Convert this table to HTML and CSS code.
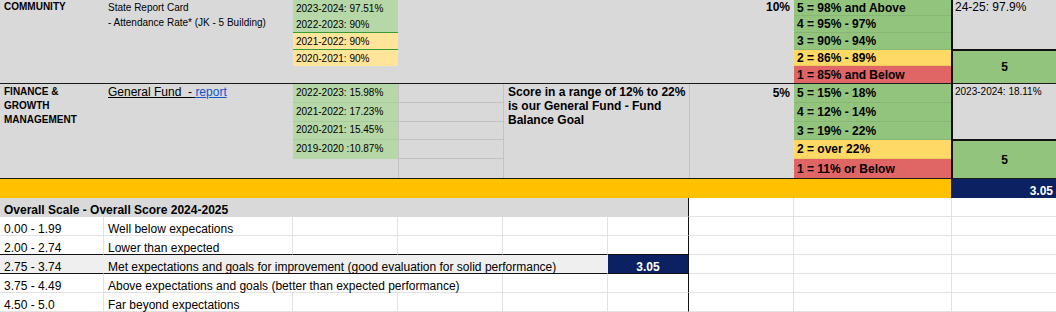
FILE: index.html
```html
<!DOCTYPE html>
<html lang="en">
<head>
<meta charset="utf-8">
<title>Scorecard</title>
<link rel="stylesheet" href="styles.css">
</head>
<body>
<div class="sheet">
  <div class="block community">
    <div class="cell w-a label">COMMUNITY</div>
    <div class="cell w-b desc">State Report Card<br>- Attendance Rate* (JK - 5 Building)</div>
    <div class="stack w-c">
      <div class="hv lg">2023-2024: 97.51%</div>
      <div class="hv lg gline">2022-2023: 90%</div>
      <div class="hv ly gline">2021-2022: 90%</div>
      <div class="hv ly">2020-2021: 90%</div>
      <div></div>
    </div>
    <div class="w-def"></div>
    <div class="cell w-g weight">10%</div>
    <div class="stack w-h">
      <div class="sv sg">5 = 98% and Above</div>
      <div class="sv sg">4 = 95% - 97%</div>
      <div class="sv sg">3 = 90% - 94%</div>
      <div class="sv sy">2 = 86% - 89%</div>
      <div class="sv sr">1 = 85% and Below</div>
    </div>
    <div class="score w-i">
      <div class="score-note big">24-25: 97.9%</div>
      <div class="score-val">5</div>
    </div>
  </div>

  <div class="block finance">
    <div class="cell w-a label">FINANCE &amp;<br>GROWTH<br>MANAGEMENT</div>
    <div class="cell w-b desc2"><span class="ul">General Fund&nbsp; - </span><a class="link" href="#">report</a></div>
    <div class="stack w-c">
      <div class="hv lg sep">2022-2023: 15.98%</div>
      <div class="hv lg sep">2021-2022: 17.23%</div>
      <div class="hv lg sep">2020-2021: 15.45%</div>
      <div class="hv lg">2019-2020 :10.87%</div>
      <div></div>
    </div>
    <div class="stack w-d vline">
      <div class="gl"></div>
      <div class="gl"></div>
      <div class="gl"></div>
      <div class="gl"></div>
      <div></div>
    </div>
    <div class="cell w-ef vline goal">Score in a range of 12% to 22% is our General Fund - Fund Balance Goal</div>
    <div class="cell w-g vline weight weight2">5%</div>
    <div class="stack w-h">
      <div class="sv sg">5 = 15% - 18%</div>
      <div class="sv sg">4 = 12% - 14%</div>
      <div class="sv sg">3 = 19% - 22%</div>
      <div class="sv sy">2 = over 22%</div>
      <div class="sv sr">1 = 11% or Below</div>
    </div>
    <div class="score w-i">
      <div class="score-note">2023-2024: 18.11%</div>
      <div class="score-val">5</div>
    </div>
  </div>

  <div class="total">
    <div class="total-fill"></div>
    <div class="total-val">3.05</div>
  </div>

  <div class="overall">
    <div class="orow">
      <div class="oc o-af hdr">Overall Scale - Overall Score 2024-2025</div>
      <div class="oc o-g"></div>
      <div class="oc o-h"></div>
      <div class="oc o-i"></div>
    </div>
    <div class="orow">
      <div class="oc o-a">0.00 - 1.99</div>
      <div class="oc o-b">Well below expecations</div>
      <div class="oc o-c"></div>
      <div class="oc o-d"></div>
      <div class="oc o-e"></div>
      <div class="oc o-f"></div>
      <div class="oc o-g"></div>
      <div class="oc o-h"></div>
      <div class="oc o-i"></div>
    </div>
    <div class="orow above-hl">
      <div class="oc o-a">2.00 - 2.74</div>
      <div class="oc o-b">Lower than expected</div>
      <div class="oc o-c"></div>
      <div class="oc o-d"></div>
      <div class="oc o-e"></div>
      <div class="oc o-f"></div>
      <div class="oc o-g keep"></div>
      <div class="oc o-h keep"></div>
      <div class="oc o-i keep"></div>
    </div>
    <div class="orow hl">
      <div class="oc o-a">2.75 - 3.74</div>
      <div class="oc o-be">Met expectations and goals for improvement (good evaluation for solid performance)</div>
      <div class="oc o-f navy">3.05</div>
      <div class="oc o-g keep"></div>
      <div class="oc o-h keep"></div>
      <div class="oc o-i keep"></div>
    </div>
    <div class="orow">
      <div class="oc o-a">3.75 - 4.49</div>
      <div class="oc o-bd">Above expectations and goals (better than expected performance)</div>
      <div class="oc o-e"></div>
      <div class="oc o-f"></div>
      <div class="oc o-g"></div>
      <div class="oc o-h"></div>
      <div class="oc o-i"></div>
    </div>
    <div class="orow">
      <div class="oc o-a">4.50 - 5.0</div>
      <div class="oc o-b">Far beyond expectations</div>
      <div class="oc o-c"></div>
      <div class="oc o-d"></div>
      <div class="oc o-e"></div>
      <div class="oc o-f"></div>
      <div class="oc o-g"></div>
      <div class="oc o-h"></div>
      <div class="oc o-i"></div>
    </div>
  </div>
</div>
</body>
</html>
```

FILE: styles.css
```css
* { box-sizing: border-box; margin: 0; padding: 0; }

html, body {
  background: #ffffff;
}

body {
  margin: 0;
  width: 1056px;
  height: 312px;
  overflow: hidden;
  font-family: "Liberation Sans", Arial, sans-serif;
  color: #000;
}

.sheet {
  width: 1056px;
  display: flex;
  flex-direction: column;
}

/* ---------- upper blocks ---------- */
.block {
  display: flex;
  background: #d9d9d9;
  border-bottom: 1px solid #1a1a1a;
}
.community { height: 84px; }
.finance { height: 95px; }

.w-a { width: 104px; flex: none; }
.w-b { width: 189px; flex: none; }
.w-c { width: 105px; flex: none; }
.w-d { width: 105px; flex: none; }
.w-def { width: 291px; flex: none; }
.w-ef { width: 186px; flex: none; }
.w-g { width: 105px; flex: none; }
.w-h { width: 157px; flex: none; }
.w-i { width: 105px; flex: none; }

.vline { border-left: 1px solid #c2c2c2; }

.stack { display: grid; }
.community .stack { grid-template-rows: 16px 17px 17px 16px 17px; }
.finance .stack { grid-template-rows: 19px 19px 18px 19px 19px; }

.label {
  font-size: 10px;
  font-weight: bold;
  line-height: 14px;
  padding: 1px 4px 0 4px;
}
.community .label { padding-top: 0; }

.desc {
  font-size: 10px;
  line-height: 14.5px;
  padding: 1px 4px 0 4px;
  white-space: nowrap;
}
.desc2 {
  font-size: 12px;
  line-height: 14px;
  padding: 1px 4px 0 4px;
  white-space: nowrap;
}
.ul { text-decoration: underline; }
.link { color: #1155cc; text-decoration: underline; }

.hv {
  font-size: 10px;
  line-height: 12px;
  padding: 0 3px;
  display: flex;
  align-items: flex-end;
  padding-bottom: 1px;
  white-space: nowrap;
}
.finance .hv { align-items: center; padding-bottom: 1px; }
.lg { background: #b6d7a8; }
.ly { background: #ffe599; }
.gline { border-bottom: 1px solid #3a9a3a; }
.sep { border-bottom: 1px solid #a9cc9a; }

.gl { border-bottom: 1px solid #c2c2c2; }

.goal {
  font-size: 12px;
  font-weight: bold;
  line-height: 14px;
  padding: 1px 0 0 4px;
}

.weight {
  font-size: 12px;
  font-weight: bold;
  line-height: 14px;
  text-align: right;
  padding: 0 4px 0 0;
}
.weight2 { padding-top: 2px; }

.sv {
  font-size: 12px;
  font-weight: bold;
  line-height: 14px;
  padding: 0 3px;
  display: flex;
  align-items: center;
  white-space: nowrap;
  border-bottom: 1px solid rgba(0, 0, 0, 0.07);
}
.sv:last-child { border-bottom: none; }
.sg { background: #93c47d; }
.sy { background: #ffd966; }
.sr { background: #e06666; }

.score {
  display: grid;
  border-left: 2px solid #111;
}
.community .score { grid-template-rows: 50px 1fr; }
.finance .score { grid-template-rows: 56px 1fr; }

.score-note {
  font-size: 10px;
  line-height: 12px;
  padding: 2px 2px 0 2px;
  border-bottom: 1px solid #111;
  white-space: nowrap;
}
.score-note.big {
  font-size: 12px;
  line-height: 14px;
  padding-top: 0;
}
.score-val {
  background: #93c47d;
  border-top: 1px solid #111;
  font-size: 12px;
  font-weight: bold;
  display: flex;
  align-items: center;
  justify-content: center;
}

/* ---------- total row ---------- */
.total {
  display: flex;
  height: 19px;
}
.total-fill {
  flex: 1;
  background: #ffc000;
}
.total-val {
  width: 105px;
  flex: none;
  background: #0b2161;
  color: #fff;
  font-size: 12px;
  font-weight: bold;
  line-height: 14px;
  display: flex;
  align-items: flex-end;
  justify-content: flex-end;
  padding: 0 3px 0 0;
}

/* ---------- overall scale table ---------- */
.overall {
  display: flex;
  flex-direction: column;
}
.orow {
  display: flex;
  height: 19px;
}
.oc {
  flex: none;
  border-right: 1px solid #e2e2e2;
  border-bottom: 1px solid #e2e2e2;
  display: flex;
  align-items: flex-end;
  padding: 0 3px 0 4px;
  font-size: 12px;
  line-height: 12px;
  white-space: nowrap;
  overflow: visible;
}
.o-a { width: 104px; }
.o-b { width: 189px; }
.o-c { width: 105px; }
.o-d { width: 105px; }
.o-e { width: 105px; }
.o-f { width: 81px; border-right: 1px solid #111; }
.o-g { width: 105px; }
.o-h { width: 158px; }
.o-i { width: 104px; border-right: none; }
.o-af { width: 689px; }
.o-be { width: 504px; }
.o-bd { width: 399px; }

.hdr {
  background: #d9d9d9;
  font-weight: bold;
  border-right: 1px solid #111;
  border-bottom-color: #d9d9d9;
}

.above-hl .oc { border-bottom-color: #111; }
.above-hl .oc.keep { border-bottom-color: #e2e2e2; }

.hl .oc { border-bottom-color: #111; }
.hl .oc.keep { border-bottom-color: #e2e2e2; }
.hl .o-a, .hl .o-be {
  background: #efefef;
  border-right-color: #efefef;
}
.navy {
  background: #0b2161;
  color: #fff;
  font-weight: bold;
  justify-content: center;
  padding: 0;
}
```
